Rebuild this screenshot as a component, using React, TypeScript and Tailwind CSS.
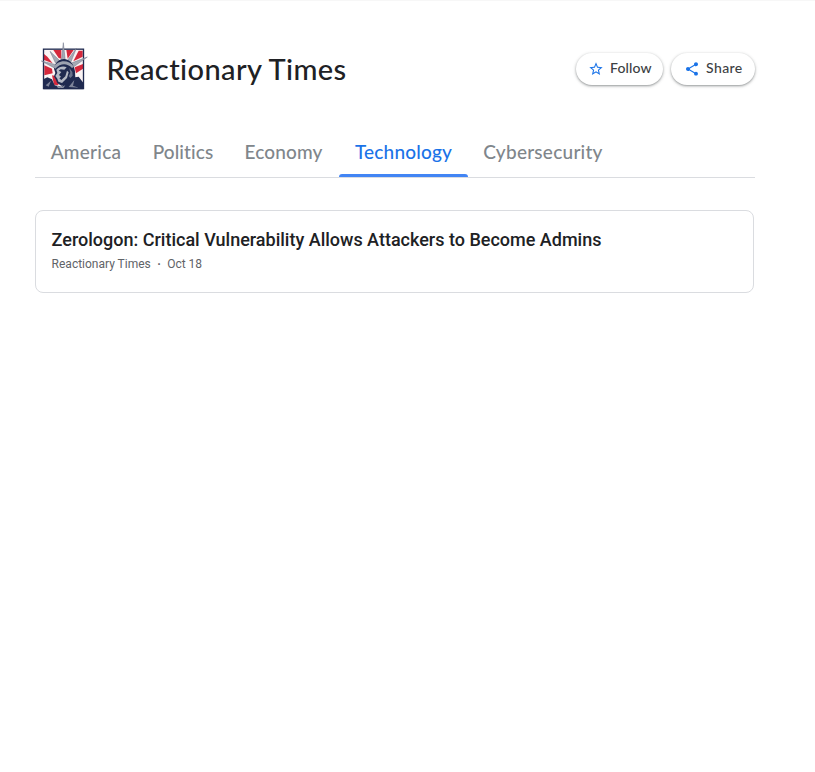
import { useState } from "react";

const tabs = [
  { name: "America", cls: "w-[102px] tracking-[0.25px]" },
  { name: "Politics", cls: "w-[92px] tracking-[0.1px]" },
  { name: "Economy", cls: "w-[110px] pr-px tracking-[0.15px]" },
  { name: "Technology", cls: "w-[129px] tracking-[0.2px]" },
  { name: "Cybersecurity", cls: "w-[150px] tracking-[0.25px]" },
];

function Logo() {
  return (
    <svg className="-mt-1 h-[50px] w-[52px] shrink-0" viewBox="6 18 156 150" aria-label="Reactionary Times">
      <rect x="28" y="40" width="121" height="118" fill="#fbf4f4" />
      <g fill="#d5283c">
        <path d="M30 54L40 62L56 82L30 72Z" />
        <path d="M58 42H82V68L74 66Z" />
        <path d="M97 42H119L101 68Z" />
        <path d="M146 44V62L118 76L134 44Z" />
        <path d="M31 88L54 98L56 112L31 118Z" />
        <path d="M147 84V98L126 112L122 94Z" />
        <path d="M54 118L64 120L74 148L60 146Z" />
      </g>
      <rect x="28.500" y="39.500" width="120" height="118" fill="none" stroke="#202a50" strokeWidth="4" />
      <path d="M28 130L40 124L54 130L62 148L82 152L104 134L112 116L124 124L134 122L149 142V160H28Z" fill="#202a50" />
      <g fill="#a5a9b4" stroke="#6c7287" strokeWidth="1.500">
        <path d="M82 76L88 20L94 76Z" />
        <path d="M65 82L48 46L79 76Z" />
        <path d="M99 75L127 37L109 82Z" />
        <path d="M60 95L22 75L66 86Z" />
        <path d="M110 82L160 63L117 94Z" />
      </g>
      <path d="M60 98C65 76 78 68 92 69C108 71 120 85 123 106L124 126L110 134L100 148L82 149L70 142L65 130L60 121L64 111Z" fill="#202a50" />
      <path d="M59 94C70 72 103 68 120 92L114 96C99 81 80 81 64 98Z" fill="#9da2b0" />
      <path d="M67 101C76 91 89 89 98 94L91 101L80 100L74 104L82 108L75 117L81 122L76 127L82 132L94 121L99 104L104 109L99 126L84 141L73 137L70 128L64 120L70 111Z" fill="#b4b8c4" />
      <path d="M106 96L115 108L116 119L109 126L104 120L109 111Z" fill="#69718a" />
      <path d="M35 148L51 134L44 152ZM104 153L121 132L117 149L134 155Z" fill="#7d8399" />
      <path d="M66 147L80 154L94 148L88 156H72Z" fill="#8e94a6" />
    </svg>
  );
}

const pill =
  "flex h-8 items-center rounded-full bg-white pl-3 text-[14px] font-medium text-[#3c4043] shadow-[0_1px_2px_rgba(60,64,67,0.4),0_1px_3px_1px_rgba(60,64,67,0.15)]";

export default function App() {
  const [active, setActive] = useState("Technology");

  return (
    <div className="min-h-screen border-t border-[#f7f7f7] bg-white pl-[35px] font-['Roboto',sans-serif] text-[#202124]">
      <div className="w-[720px]">
        <header className="flex h-[136px] items-center pl-px">
          <Logo />
          <h1 className="ml-[18.500px] font-['Lato',sans-serif] text-[29px] leading-9 font-medium tracking-[0.4px] whitespace-nowrap">Reactionary Times</h1>
          <div className="ml-auto flex gap-2 font-['Lato',sans-serif]">
            <button type="button" className={`${pill} w-[87px]`}>
              <svg className="mr-[6px] h-4 w-4 fill-[#1a73e8]" viewBox="0 0 24 24">
                <path d="M22 9.240l-7.190-.620L12 2 9.190 8.630 2 9.240l5.460 4.730L5.820 21 12 17.270 18.180 21l-1.630-7.030L22 9.240zM12 15.400l-3.760 2.270 1-4.280-3.320-2.880 4.380-.38L12 6.100l1.710 4.040 4.380.38-3.320 2.880 1 4.280L12 15.400z" />
              </svg>
              <span className="-mt-[3px] tracking-[0.15px]">Follow</span>
            </button>
            <button type="button" className={`${pill} w-[84px]`}>
              <svg className="mr-[6px] ml-px h-4 w-4 fill-[#1a73e8]" viewBox="0 0 24 24">
                <path d="M18 16.080c-.76 0-1.440.3-1.960.770L8.910 12.700c.05-.23.09-.46.09-.7s-.04-.47-.09-.7l7.050-4.110c.54.5 1.250.81 2.040.81 1.660 0 3-1.340 3-3s-1.340-3-3-3-3 1.340-3 3c0 .24.04.47.09.7L8.040 9.810C7.500 9.310 6.790 9 6 9c-1.660 0-3 1.340-3 3s1.340 3 3 3c.79 0 1.500-.31 2.040-.81l7.120 4.160c-.05.21-.08.43-.08.65 0 1.610 1.310 2.920 2.920 2.920s2.920-1.310 2.920-2.920-1.310-2.920-2.920-2.920z" />
              </svg>
              <span className="-mt-[3px] tracking-[0.4px]">Share</span>
            </button>
          </div>
        </header>

        <nav className="-mt-2 flex h-[49px] border-b border-[#dadce0] font-['Lato',sans-serif] text-[19px] font-medium">
          {tabs.map((t) => (
            <button
              key={t.name}
              type="button"
              onClick={() => setActive(t.name)}
              className={`flex flex-col items-center justify-end whitespace-nowrap ${t.cls} ${active === t.name ? "text-[#1a73e8]" : "text-[#80868b]"}`}
            >
              <span className="mb-[10px] leading-6">{t.name}</span>
              <span className={`h-[3px] w-full rounded-t-[3px] ${active === t.name ? "bg-[#4285f4]" : ""}`} />
            </button>
          ))}
        </nav>

        <article className="mt-8 h-[83px] w-[719px] rounded-lg border border-[#dadce0] px-[15.600px] pt-[17px]">
          <h2 className="text-[18px] leading-6 font-medium whitespace-nowrap">Zerologon: Critical Vulnerability Allows Attackers to Become Admins</h2>
          <div className="mt-1 flex text-[12px] leading-4 text-[#5f6368]">
            <span>Reactionary Times</span>
            <span className="w-[16.400px] pt-px text-center font-bold">·</span>
            <span>Oct 18</span>
          </div>
        </article>
      </div>
    </div>
  );
}
